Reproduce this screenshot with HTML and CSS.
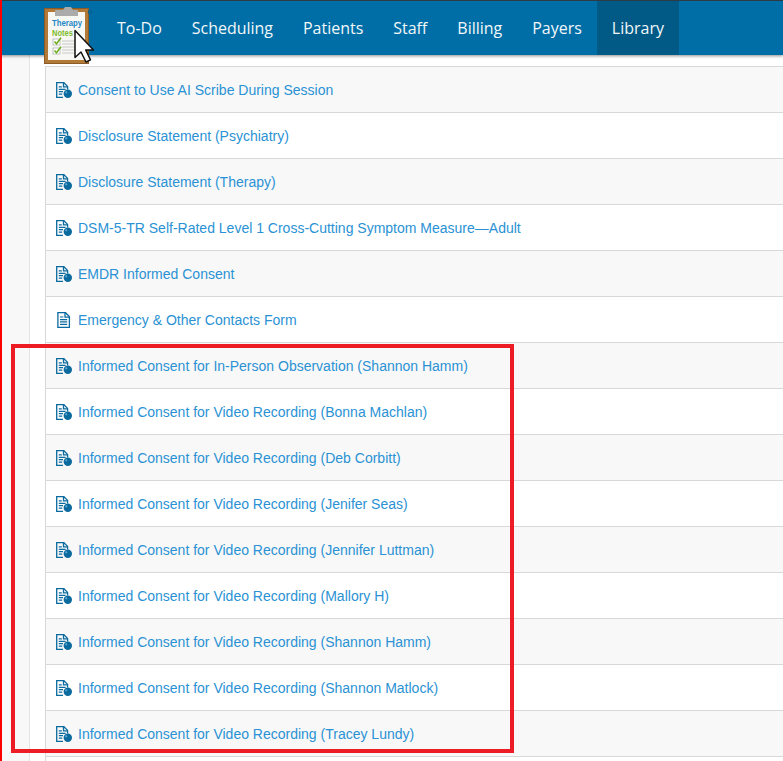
FILE: index.html
```html
<!DOCTYPE html>
<html lang="en">
<head>
<meta charset="utf-8">
<title>Library</title>
<link rel="stylesheet" href="styles.css">
</head>
<body>
<svg class="defs" width="0" height="0" aria-hidden="true">
  <symbol id="doc" viewBox="0 0 16 16">
    <path d="M1.9 .7h7.6l3.9 3.9v10.7H1.9z" fill="none" stroke="currentColor" stroke-width="1.3"/>
    <path d="M9 .7v4.4h4.4" fill="none" stroke="currentColor" stroke-width="1.3"/>
    <path d="M4 5h3.4M4 7.6h7.2M4 9.9h7.2M4 12.3h7.2" stroke="currentColor" stroke-width="1.2"/>
  </symbol>
  <symbol id="doc-shared" viewBox="0 0 16 16">
    <path d="M7 15.3H.7V.7h7.2l3.7 3.7v3.2" fill="none" stroke="currentColor" stroke-width="1.3"/>
    <path d="M7.5 .7v4.2h4.2" fill="none" stroke="currentColor" stroke-width="1.3"/>
    <path d="M2.8 4.8h3M2.8 7.3h6.8M2.8 9.7h4.2M2.8 12.2h3.4" stroke="currentColor" stroke-width="1.2"/>
    <circle cx="11.8" cy="11.8" r="4.2" fill="#0b6a9e"/>
    <circle cx="10.2" cy="10.3" r="1.1" fill="#5fa8cf"/>
  </symbol>
</svg>

<header class="topbar">
  <a class="logo" href="#">
    <svg width="52" height="60" viewBox="0 0 52 60" aria-hidden="true">
      <rect x="1" y="3" width="43" height="54" fill="#b27a36"/>
      <rect x="0.5" y="2.5" width="44" height="55" fill="none" stroke="#8c5c28"/>
      <rect x="4" y="6" width="37" height="48" fill="#f7f7f4"/>
      <path d="M11 10V5q0-1 1-1h7l2-3h6l2 3h4q1 0 1 1v5z" fill="#ababab"/>
      <text x="8" y="20" class="logo-a" textLength="30" lengthAdjust="spacingAndGlyphs">Therapy</text>
      <text x="8" y="29.500" class="logo-b" textLength="21" lengthAdjust="spacingAndGlyphs">Notes</text>
      <rect x="9" y="33" width="7" height="6" fill="#fff" stroke="#999" stroke-width=".6"/>
      <rect x="9" y="42" width="7" height="6" fill="#fff" stroke="#999" stroke-width=".6"/>
      <path d="M10.500 35.500l2 2.300 4.500-6M10.500 44.500l2 2.300 4.500-6" fill="none" stroke="#6fae1e" stroke-width="1.600"/>
      <path d="M18 35h14M18 38h14M18 41h14M18 44h14M18 47h14" stroke="#c8c8c8"/>
      <path d="M31 24.500v27l6-5.500 5 10 4.500-2.200-4.800-9.800h7.800z" fill="#fff" stroke="#111" stroke-width="1.500" stroke-linejoin="round"/>
      <circle cx="46" cy="6" r="1.800" fill="none" stroke="#0b5f8c"/>
    </svg>
  </a>
  <nav class="nav">
    <a href="#">To-Do</a>
    <a href="#">Scheduling</a>
    <a href="#">Patients</a>
    <a href="#">Staff</a>
    <a href="#">Billing</a>
    <a href="#">Payers</a>
    <a href="#" class="active">Library</a>
  </nav>
</header>

<main class="page">
  <div class="gutter"></div>
  <ul class="list">
    <li><svg class="ic"><use href="#doc-shared"/></svg><a href="#">Consent to Use AI Scribe During Session</a></li>
    <li><svg class="ic"><use href="#doc-shared"/></svg><a href="#">Disclosure Statement (Psychiatry)</a></li>
    <li><svg class="ic"><use href="#doc-shared"/></svg><a href="#">Disclosure Statement (Therapy)</a></li>
    <li><svg class="ic"><use href="#doc-shared"/></svg><a href="#">DSM-5-TR Self-Rated Level 1 Cross-Cutting Symptom Measure—Adult</a></li>
    <li><svg class="ic"><use href="#doc-shared"/></svg><a href="#">EMDR Informed Consent</a></li>
    <li><svg class="ic ic-plain"><use href="#doc"/></svg><a href="#">Emergency &amp; Other Contacts Form</a></li>
    <li><svg class="ic"><use href="#doc-shared"/></svg><a href="#">Informed Consent for In-Person Observation (Shannon Hamm)</a></li>
    <li><svg class="ic"><use href="#doc-shared"/></svg><a href="#">Informed Consent for Video Recording (Bonna Machlan)</a></li>
    <li><svg class="ic"><use href="#doc-shared"/></svg><a href="#">Informed Consent for Video Recording (Deb Corbitt)</a></li>
    <li><svg class="ic"><use href="#doc-shared"/></svg><a href="#">Informed Consent for Video Recording (Jenifer Seas)</a></li>
    <li><svg class="ic"><use href="#doc-shared"/></svg><a href="#">Informed Consent for Video Recording (Jennifer Luttman)</a></li>
    <li><svg class="ic"><use href="#doc-shared"/></svg><a href="#">Informed Consent for Video Recording (Mallory H)</a></li>
    <li><svg class="ic"><use href="#doc-shared"/></svg><a href="#">Informed Consent for Video Recording (Shannon Hamm)</a></li>
    <li><svg class="ic"><use href="#doc-shared"/></svg><a href="#">Informed Consent for Video Recording (Shannon Matlock)</a></li>
    <li><svg class="ic"><use href="#doc-shared"/></svg><a href="#">Informed Consent for Video Recording (Tracey Lundy)</a></li>
  </ul>
</main>
<div class="annotation"></div>
</body>
</html>
```
FILE: styles.css
```css
* { box-sizing: border-box; }
html, body { height: 761px; overflow: hidden; }
body { margin: 0; background: #fff; font-family: "Liberation Sans", Arial, sans-serif; position: relative; border-left: 2px solid #f00; }
.defs { position: absolute; }
.topbar {
  height: 55px; margin-left: -2px; background: #006ea6; border-top: 1px solid #2f3b44;
  box-shadow: 0 1px 3px rgba(0,0,0,.45); display: flex; position: relative; z-index: 2; padding-left: 102px;
}
.logo { position: absolute; left: 44px; top: 5px; width: 52px; height: 60px; }
.logo-a { font: bold 8.5px "Liberation Sans", sans-serif; fill: #1f87c4; }
.logo-b { font: bold 8.5px "Liberation Sans", sans-serif; fill: #7dbb2a; }
.nav { display: flex; height: 54px; }
.nav a {
  display: flex; align-items: center; padding: 0 15px; color: #f2f7fa; text-decoration: none;
  font: 15.97px "Open Sans", sans-serif;
}
.nav a.active { background: #005a85; }
.page { display: flex; }
.gutter { width: 28px; height: 706px; background: #f8f8f8; border-right: 1px solid #e4e4e4; margin-right: 15px; }
.list { flex: 1; margin: 11px 0 0; padding: 0; list-style: none; border-top: 1px solid #d8d8d8; border-left: 1px solid #d8d8d8; }
.list li { height: 46px; border-bottom: 1px solid #d8d8d8; display: flex; align-items: center; padding-left: 10px; gap: 6px; background: #fff; }
.list li:nth-child(odd) { background: #f8f8f8; }
.ic { width: 16px; height: 16px; color: #0b6a9e; flex: none; }
.list a { color: #2a92d4; text-decoration: none; font-size: 14px; }
.annotation { position: absolute; left: 9px; top: 344px; width: 503px; height: 409px; border: 4px solid #ed1c24; z-index: 3; }
```
